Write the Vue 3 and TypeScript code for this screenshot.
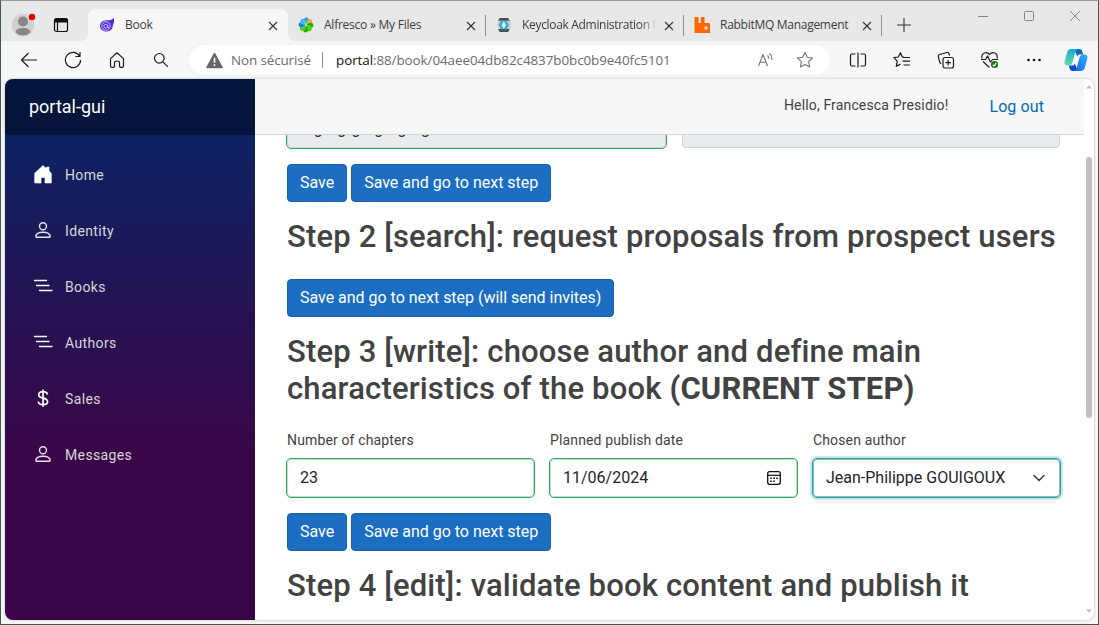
<script setup lang="ts">
import { ref } from 'vue'

interface Tab {
  id: string
  title: string
  active?: boolean
}
interface NavItem {
  label: string
  icon: 'home' | 'person' | 'list' | 'dollar'
}

const tabs: Tab[] = [
  { id: 'book', title: 'Book', active: true },
  { id: 'alfresco', title: 'Alfresco » My Files' },
  { id: 'keycloak', title: 'Keycloak Administration U' },
  { id: 'rabbit', title: 'RabbitMQ Management' },
]
const nav: NavItem[] = [
  { label: 'Home', icon: 'home' },
  { label: 'Identity', icon: 'person' },
  { label: 'Books', icon: 'list' },
  { label: 'Authors', icon: 'list' },
  { label: 'Sales', icon: 'dollar' },
  { label: 'Messages', icon: 'person' },
]
const petals = [
  { a: 0, c: '#1b9bf0' },
  { a: 45, c: '#fba919' },
  { a: 90, c: '#12b312' },
  { a: 135, c: '#5ccb05' },
  { a: 180, c: '#12b312' },
  { a: 225, c: '#5ccb05' },
  { a: 270, c: '#0c83e8' },
  { a: 315, c: '#38b6ff' },
]
const chapters = ref('23')
const publishDate = ref('11/06/2024')
const summary = ref('ergorgrgergorgorg')
const author = ref('Jean-Philippe GOUIGOUX')
</script>

<template>
  <div class="window">
    <header class="tabstrip">
      <div class="slot avatar">
        <svg width="26" height="26" viewBox="0 0 26 26">
          <circle cx="12" cy="14" r="11.2" fill="#d2d0ce" />
          <circle cx="12" cy="10.5" r="5" fill="#8a8886" />
          <path d="M4.5 21.5C5 18 8 17 12 17s7 1 7.500 4.500A11 11 0 0 1 4.500 21.500z" fill="#8a8886" />
          <circle cx="21" cy="6" r="3.200" fill="#e80000" />
        </svg>
      </div>
      <div class="slot workspace">
        <svg width="16" height="16" viewBox="0 0 16 16" fill="none" stroke="#111">
          <rect x="1.500" y="1.500" width="13" height="13" rx="2" stroke-width="1.200" />
          <path d="M1.500 5V3.500a2 2 0 0 1 2-2h9a2 2 0 0 1 2 2V5z" fill="#111" />
          <path d="M4.500 5v9.500" stroke-width="1.200" />
        </svg>
      </div>
      <div v-for="t in tabs" :key="t.id" class="tab" :class="{ active: t.active }">
        <svg v-if="t.id === 'book'" class="fav" viewBox="0 0 16 16" fill="none">
          <path d="M8.500 3.300C11 3.600 13 2.800 14.800 1c.6 3 .2 5.200-1 7.300.2 3.800-2.600 6.200-6.300 6.200C3.800 14.500 1 12 1 9s2.800-6 7.500-5.700z" fill="#512bd4" />
          <circle cx="7" cy="9" r="4.200" stroke="#e9e2ff" stroke-width=".8" />
          <circle cx="6.800" cy="9.200" r="1.900" stroke="#e9e2ff" stroke-width=".8" />
          <path d="M8.700 8v2.400h1.600" stroke="#e9e2ff" stroke-width=".7" />
        </svg>
        <svg v-else-if="t.id === 'alfresco'" class="fav" viewBox="0 0 16 16">
          <g v-for="p in petals" :key="p.a" :transform="`rotate(${p.a} 8 8)`">
            <path d="M8 7.500C5.600 5.500 5 2.200 7.300.7c2.300-.6 4 1 3.400 3C10.200 5.500 9 6.500 8 7.500z" :fill="p.c" />
            <path d="M8 7.500C9 6 9.600 4.500 9.300 3" stroke="#eef7e8" stroke-width=".6" fill="none" />
          </g>
        </svg>
        <svg v-else-if="t.id === 'keycloak'" class="fav" viewBox="0 0 16 16" fill="none">
          <path d="M2.600 3.600h12.400v8.400H2.600L1 8z" fill="#cfcfcf" />
          <path d="M3.600 1h8.600l1.500 2.800H2.100zM2.100 12h11.600l-1.500 3H3.600z" fill="#4d4d4d" />
          <path d="M6.600 3.600 4 8l2.600 4.400M9 3.600 11.600 8 9 12.400" stroke="#14b1dc" stroke-width="2.200" />
          <path d="M7.800 5 6.200 8l1.600 3L9.400 8z" fill="#eee" />
        </svg>
        <svg v-else class="fav" viewBox="0 0 16 16">
          <path d="M.5 0h4v6h2.300V0h3.700v6H15a1 1 0 0 1 1 1v9H.5zM10.500 9.500v3h3v-3z" fill="#ff6600" fill-rule="evenodd" />
        </svg>
        <span class="title" :class="t.id">{{ t.title }}</span>
        <svg class="close" viewBox="0 0 10 10" stroke="#333" stroke-width="1.100"><path d="M1 1l8 8M9 1l-8 8" /></svg>
      </div>
      <svg class="plus" viewBox="0 0 14 14" stroke="#333" stroke-width="1.100"><path d="M7 0v14M0 7h14" /></svg>
      <div class="controls">
        <svg viewBox="0 0 12 12"><path d="M1 6.500h10" /></svg>
        <svg viewBox="0 0 12 12"><rect x="1.500" y="1.500" width="9" height="9" rx="1" /></svg>
        <svg viewBox="0 0 12 12"><path d="M1 1l10 10M11 1L1 11" /></svg>
      </div>
    </header>

    <div class="toolbar">
      <div class="tool"><svg width="18" height="18" viewBox="0 0 18 18"><path d="M17 9H1.500M8.500 2l-7 7 7 7" /></svg></div>
      <div class="tool"><svg width="18" height="18" viewBox="0 0 18 18"><path d="M15.500 5A7.600 7.600 0 1 0 16.600 9M16 1v4.500h-4.500" /></svg></div>
      <div class="tool"><svg width="18" height="18" viewBox="0 0 18 18"><path d="M2.500 7.600 9 1.800l6.500 5.800V15q0 1.300-1.300 1.300h-1.400q-1.300 0-1.300-1.300v-3.200Q11.500 10 9 10t-2.500 1.800V15q0 1.300-1.300 1.300H3.800Q2.500 16.300 2.500 15z" /></svg></div>
      <div class="tool"><svg width="18" height="18" viewBox="0 0 18 18"><circle cx="7.300" cy="7.300" r="4.800" /><path d="M10.900 10.900l5 5" /></svg></div>
      <div class="address">
        <svg class="warn" viewBox="0 0 16 16"><path d="M8 1.500 15 14.500H1z" fill="#666" stroke="#666" stroke-width="1.500" stroke-linejoin="round" /><path d="M8 5.300v4.800M8 11.500v1.700" stroke="#fff" stroke-width="1.500" /></svg>
        <span class="insecure">Non sécurisé</span>
        <i class="bar"></i>
        <span class="url"><b>portal</b>:88/book/04aee04db82c4837b0bc0b9e40fc5101</span>
        <svg class="read" viewBox="0 0 18 18"><path d="M1.500 15 6 3.500 10.500 15M3.100 11.200h5.800M10.500 4.500q1.400 1.300 1.200 3.300M12.500 2.500q3 2.400 2.200 6.300" /></svg>
        <svg class="star" viewBox="0 0 18 18"><path d="M9 1.500l2.300 4.800 5.200.7-3.800 3.700.9 5.300L9 13.500 4.400 16l.9-5.300L1.500 7l5.200-.7z" /></svg>
      </div>
      <div class="tool first"><svg width="18" height="18" viewBox="0 0 18 18"><path d="M6.500 3H3Q1.500 3 1.500 4.500v9Q1.500 15 3 15h3.500M11.500 3H15q1.500 0 1.500 1.500v9Q16.500 15 15 15h-3.500M9 1.500v15" /></svg></div>
      <div class="tool"><svg width="18" height="18" viewBox="0 0 18 18"><path d="M10.800 6.300 9.300 5.900 7.400 1.700 5.300 6 .9 6.700l3.300 3.400-.9 5.200 4.100-2.200M10.500 6.500h6.500M9.500 10.200H17M10.500 14H17" /></svg></div>
      <div class="tool"><svg width="18" height="18" viewBox="0 0 18 18"><rect x="6" y="6.500" width="10.500" height="10.500" rx="2" /><path d="M11.200 9v5.500M8.500 11.700H14M4 12.800 2.800 11.600 1.300 5.500Q1.200 4 2.500 3.500l7.500-2q1.500-.2 2 1.200l.6 1.800" /></svg></div>
      <div class="tool"><svg width="20" height="18" viewBox="0 0 20 18"><path d="M2 7.500C.8 1.500 7 .2 9.500 3.500 12 .2 18.500 1.500 17 7.500M1 8.500h4.500L7.500 5l3 6L12.500 8.500H18M3 10.500l6.500 6" /><circle cx="14.500" cy="13.500" r="3.600" fill="#107c10" stroke="none" /><path d="M12.800 13.800l1.200 1.200 2.300-2.800" stroke="#fff" /></svg></div>
      <div class="tool"><svg width="18" height="18" viewBox="0 0 18 18" class="dots"><circle cx="3.500" cy="9" r="1.300" /><circle cx="9" cy="9" r="1.300" /><circle cx="14.500" cy="9" r="1.300" /></svg></div>
      <div class="tool copilot">
        <svg width="24" height="24" viewBox="0 0 24 24">
          <defs>
            <linearGradient id="ca" x1="0" y1="0" x2="0" y2="1"><stop offset="0" stop-color="#15a7dc" /><stop offset="1" stop-color="#68df9c" /></linearGradient>
            <linearGradient id="cb" x1="1" y1="0" x2="0" y2="1"><stop offset="0" stop-color="#2fb3ff" /><stop offset="1" stop-color="#1764ef" /></linearGradient>
          </defs>
          <path d="M10 1h5.500q2 0 2.700 2l1 3.500h-4q-1.500 0-2 2z" fill="#0a6eaa" />
          <path d="M14 23H8.500q-2 0-2.700-2l-1-3.500h4q1.500 0 2-2z" fill="#1546cf" />
          <path d="M6.500 1H14q-2 .5-2.600 3L8.600 14q-.9 3.500-3.800 3.500H3q-3.200-.3-2.400-4L3.300 4Q4.200 1 6.500 1z" fill="url(#ca)" />
          <path d="M17.500 23H10q2-.5 2.600-3l2.800-10q.9-3.500 3.800-3.500H21q3.200.3 2.400 4L20.700 20q-.9 3-3.200 3z" fill="url(#cb)" />
        </svg>
      </div>
    </div>

    <div class="page">
      <aside class="sidebar">
        <div class="brand">portal-gui</div>
        <nav>
          <a v-for="n in nav" :key="n.label">
            <svg v-if="n.icon === 'home'" viewBox="0 0 20 20"><path d="M10 1.500l3.500 3.300V3h2.500v4l2.300 2.300V19H12v-5.500H8V19H1.700V9.300z" fill="#fff" stroke="#fff" stroke-width=".6" stroke-linejoin="round" /></svg>
            <svg v-else-if="n.icon === 'person'" viewBox="0 0 20 20" fill="none" stroke="#e5e1ee" stroke-width="1.400"><circle cx="10" cy="6.200" r="3.500" /><path d="M3.300 17.200q-.5 0-.5-1C3.200 13.500 6 12.200 10 12.200s6.800 1.300 7.200 4q0 1-.5 1z" /></svg>
            <svg v-else-if="n.icon === 'list'" viewBox="0 0 20 20" stroke="#fff" stroke-width="1.300" stroke-linecap="round"><path d="M1.500 4.500h12M3.500 9.500h12.500M6.500 14.500h12.500" /></svg>
            <svg v-else viewBox="0 0 20 20" fill="none" stroke="#fff" stroke-width="1.700"><path d="M14.500 6.500Q14 3.700 10 3.700T5.700 6.800q0 2.500 4.300 3.300t4.600 3.500q0 3.100-4.500 3.100t-4.800-3.200M10 1.500v17.200" /></svg>
            <span>{{ n.label }}</span>
          </a>
        </nav>
      </aside>
      <main>
        <div class="toprow">
          <span>Hello, Francesca Presidio!</span>
          <a>Log out</a>
        </div>
        <article>
          <div class="row two">
            <input v-model="summary" class="control valid" disabled />
            <div class="control disabled"></div>
          </div>
          <div class="actions"><button>Save</button><button>Save and go to next step</button></div>
          <h2>Step 2 [search]: request proposals from prospect users</h2>
          <div class="actions lone"><button>Save and go to next step (will send invites)</button></div>
          <h2>Step 3 [write]: choose author and define main characteristics of the book <strong>(CURRENT STEP)</strong></h2>
          <div class="row three">
            <label><span>Number of chapters</span><input v-model="chapters" class="control valid" /></label>
            <label><span>Planned publish date</span>
              <div class="control valid"><span class="value">{{ publishDate }}</span>
                <svg class="cal" viewBox="0 0 16 16"><rect x="1.700" y="1.700" width="12.600" height="12.600" rx="2" fill="none" stroke="#111" stroke-width="1.300" /><path d="M1.700 5.300h12.600" stroke="#111" stroke-width="1.200" /><path d="M7.200 7.500h1.600v1.600H7.200zM10.200 7.500h1.600v1.600h-1.600zM4.200 7.500h1.600v1.600H4.200zM4.200 10.500h1.600v1.600H4.200zM7.200 10.500h1.600v1.600H7.200z" fill="#111" /></svg>
              </div>
            </label>
            <label><span>Chosen author</span>
              <div class="control valid focused"><span class="value">{{ author }}</span>
                <svg class="chev" viewBox="0 0 12 12"><path d="M1 3.500l5 5 5-5" fill="none" stroke="#343a40" stroke-width="1.500" stroke-linecap="round" stroke-linejoin="round" /></svg>
              </div>
            </label>
          </div>
          <div class="actions"><button>Save</button><button>Save and go to next step</button></div>
          <h2>Step 4 [edit]: validate book content and publish it</h2>
        </article>
      </main>
      <div class="scroll">
        <svg viewBox="0 0 10 8"><path d="M2 5.500 5 2.300l3 3.200z" /></svg>
        <i></i>
        <svg viewBox="0 0 10 8"><path d="M2 2.500 5 5.700l3-3.200z" /></svg>
      </div>
    </div>
  </div>
</template>

<style>
html, body { margin: 0; overflow: hidden; }
</style>

<style scoped>
* { box-sizing: border-box; }
.window { width: 1099px; height: 625px; border: 1px solid #43584c; border-top-color: #999; background: #f7f7f7; font-family: "Open Sans", "Noto Sans", sans-serif; overflow: hidden; }
.tabstrip { height: 40px; display: flex; background: #e8e8e8; }
.slot { display: flex; align-items: flex-start; }
.avatar { width: 42px; padding: 10px 0 0 10px; }
.workspace { width: 45px; padding: 16px 0 0 10px; }
.tab { position: relative; display: flex; align-items: center; width: 198px; padding: 8px 0 0 10px; font-size: 12px; color: #3c3c3c; }
.tab:not(.active)::after { content: ""; position: absolute; right: 0; top: 14px; width: 1px; height: 21px; background: #8f8f8f; }
.tab.active { width: 200px; padding-left: 11px; }
.tab.active > * { position: relative; }
.tab.active::before { content: ""; position: absolute; left: 0; right: 0; top: 8px; bottom: 0; background: #f7f7f7; border-radius: 8px 8px 0 0; }
.tab.active::after { content: ""; position: absolute; left: -7px; right: -7px; bottom: 0; height: 7px; background: radial-gradient(circle at 0 0, transparent 6.5px, #f7f7f7 7px) left / 7px 7px no-repeat, radial-gradient(circle at 100% 0, transparent 6.500px, #f7f7f7 7px) right / 7px 7px no-repeat; }
.fav { width: 16px; height: 16px; flex: none; }
.title { width: 136px; margin-left: 10px; white-space: nowrap; overflow: hidden; line-height: 18px; letter-spacing: -.24px; }
.title.keycloak { width: 134px; margin-right: 2px; letter-spacing: -.32px; -webkit-mask-image: linear-gradient(90deg, #000 88%, transparent 101%); mask-image: linear-gradient(90deg, #000 88%, transparent 101%); }
.title.rabbit { letter-spacing: -.28px; }
.active .title { width: 137px; }
.close { width: 10px; height: 10px; margin-left: 5.500px; margin-top: 1px; }
.plus { width: 14px; height: 14px; margin: 16.500px 0 0 14.500px; }
.controls { display: flex; gap: 34px; margin: 9px 0 0 66.500px; }
.controls svg { width: 12px; height: 12px; fill: none; stroke: #858585; }
.toolbar { height: 38px; padding-left: 6px; display: flex; align-items: center; }
.tool { width: 44px; display: flex; justify-content: center; flex: none; }
.tool svg { fill: none; stroke: #1c1c1c; stroke-width: 1.200; stroke-linejoin: round; }
.tool .dots { fill: #111; stroke: none; }
.tool.first { margin-left: 6px; }
.tool.copilot { width: 40px; }
.tool.copilot svg { stroke: none; }
.address { width: 641px; height: 30px; margin-left: 6px; padding-left: 17px; background: #fff; border-radius: 15px; display: flex; align-items: center; color: #6b6b6b; font-size: 13.400px; box-shadow: 0 0 2px #ececec; }
.warn { width: 17px; height: 17px; }
.insecure { width: 91px; margin-left: 8px; white-space: nowrap; letter-spacing: -.1px; }
.bar { width: 1px; height: 16px; background: #8a8a8a; }
.url { width: 421px; margin-left: 13px; white-space: nowrap; letter-spacing: -.06px; }
.url b { font-weight: 400; color: #111; }
.read, .star { width: 18px; height: 18px; fill: none; stroke: #747474; stroke-width: 1.100; stroke-linejoin: round; }
.star { margin-left: 21px; }
.page { width: 1089px; height: 541px; margin-left: 4px; display: flex; border-radius: 8px; overflow: hidden; background: #fff; box-shadow: 0 0 3px #bbb; font-family: Roboto, sans-serif; color: #424242; }
.sidebar { width: 250px; flex: none; background: linear-gradient(180deg, rgb(5, 39, 103) 0%, #3a0647 70%); }
.brand { height: 56px; padding-left: 24px; line-height: 56px; font-size: 18px; color: #fff; background: rgba(0, 0, 0, .4); }
nav { padding-top: 12px; }
nav a { height: 56px; padding-left: 28px; display: flex; align-items: center; font-size: 14px; letter-spacing: .37px; color: #d7d7d7; }
nav svg { width: 20px; height: 20px; margin-right: 12px; margin-top: -2px; }
main { width: 829px; flex: none; }
.toprow { height: 56px; background: #f7f7f7; border-bottom: 1px solid #d6d5d5; display: flex; justify-content: flex-end; align-items: center; padding-right: 40px; font-size: 14px; }
.toprow span { margin-top: -3px; letter-spacing: .15px; }
.toprow a { margin-left: 41px; font-size: 16px; color: #006bb7; letter-spacing: .1px; }
article { height: 485px; padding: 0 24px 0 32px; overflow: hidden; }
.row { display: grid; gap: 16px; }
.two { margin-top: -25px; grid-template-columns: 1fr 1fr; }
.three { margin-top: 23px; grid-template-columns: repeat(3, 1fr); }
.control { width: 100%; height: 38px; padding: 0 12px 1px; border: 1px solid #ced4da; border-radius: 4px; background: #fff; font: 400 16px Roboto, sans-serif; color: #212529; display: flex; align-items: center; }
.control:disabled, .disabled { background: #e9ecef; }
.valid { outline: 1px solid #26b050; }
.focused { border-color: #86b7fe; box-shadow: 0 0 0 3px #cfe2ff; }
.value { flex: 1; }
label > span { display: block; height: 29px; line-height: 20px; font-size: 14px; letter-spacing: .14px; }
.cal { width: 16px; height: 16px; margin-right: 2px; margin-top: 1px; }
.chev { width: 12px; height: 12px; margin-right: 2px; margin-top: 1px; }
.actions { display: flex; gap: 4px; margin-top: 16px; }
.actions.lone { margin-top: 24px; }
button { height: 38px; padding: 0 12px 2px; border: 1px solid #1861ac; border-radius: 4px; background: #1b6ec2; color: #fff; font: 400 16px Roboto, sans-serif; letter-spacing: -.015px; white-space: nowrap; }
h2 { margin: 16px 0 0; font-size: 31px; line-height: 37px; font-weight: 500; letter-spacing: .165px; }
h2 strong { font-weight: 700; }
.scroll { width: 10px; display: flex; flex-direction: column; align-items: center; padding: 4px 0 5px; }
.scroll i { width: 6px; height: 261px; margin-top: 66px; background: #c1c1c1; border-radius: 3px; }
.scroll svg { width: 10px; height: 8px; fill: #bbb; flex: none; }
.scroll svg:last-child { margin-top: auto; }
</style>
